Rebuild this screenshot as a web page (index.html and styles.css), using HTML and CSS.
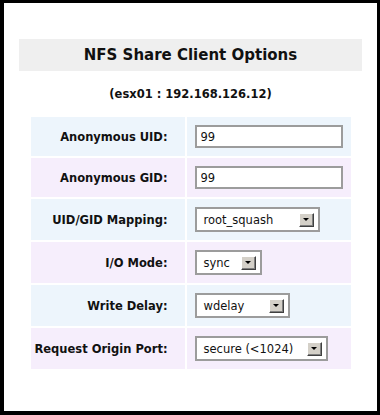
FILE: index.html
```html
<!DOCTYPE html>
<html lang="en">
<head>
  <meta charset="UTF-8" />
  <title>NFS Share Client Options</title>
  <link rel="stylesheet" href="styles.css">
</head>
<body>
  <div class="panel">
    <h2 class="title">NFS Share Client Options</h2>
    <p class="host">(esx01 : 192.168.126.12)</p>

    <table class="options">
      <tr class="blue">
        <th>Anonymous UID:</th>
        <td><input type="text" class="field" value="99" /></td>
      </tr>
      <tr class="pink">
        <th>Anonymous GID:</th>
        <td><input type="text" class="field" value="99" /></td>
      </tr>
      <tr class="blue">
        <th>UID/GID Mapping:</th>
        <td>
          <div class="select w-map"><span>root_squash</span><span class="btn"><i></i></span></div>
        </td>
      </tr>
      <tr class="pink">
        <th>I/O Mode:</th>
        <td>
          <div class="select w-mode"><span>sync</span><span class="btn"><i></i></span></div>
        </td>
      </tr>
      <tr class="blue">
        <th>Write Delay:</th>
        <td>
          <div class="select w-delay"><span>wdelay</span><span class="btn"><i></i></span></div>
        </td>
      </tr>
      <tr class="pink">
        <th>Request Origin Port:</th>
        <td>
          <div class="select w-port"><span>secure (&lt;1024)</span><span class="btn"><i></i></span></div>
        </td>
      </tr>
    </table>
  </div>
</body>
</html>
```

FILE: styles.css
```css
* {
  margin: 0;
  padding: 0;
  box-sizing: border-box;
}

html {
  background: #000;
}

body {
  margin: 3px 3px 4px 4px;
  height: 408px;
  background: #fff;
  font-family: "DejaVu Sans", Verdana, sans-serif;
  color: #111;
}

.panel {
  padding: 36px 15px 0;
}

.title {
  height: 32px;
  line-height: 32px;
  background: #efefef;
  text-align: center;
  font-size: 15px;
  font-weight: bold;
}

.host {
  margin-top: 15px;
  line-height: 16px;
  text-align: center;
  font-size: 11.5px;
  font-weight: bold;
}

.options {
  margin: 13px auto 0;
  width: 324px;
  border-spacing: 2px;
}

.options th {
  width: 154px;
  padding: 8px 17px 8px 0;
  text-align: right;
  font-size: 11.5px;
  font-weight: bold;
}

.options td {
  padding: 8px 8px;
}

.blue th,
.blue td {
  background: #edf5fc;
}

.pink th,
.pink td {
  background: #f6eefc;
}

.field {
  display: block;
  width: 148px;
  height: 23px;
  padding: 0 4px;
  border: 2px solid #9c9c9c;
  background: #fff;
  font-family: "DejaVu Sans", Verdana, sans-serif;
  font-size: 11.5px;
  color: #111;
}

.select {
  display: flex;
  align-items: center;
  justify-content: space-between;
  height: 25px;
  padding: 0 4px 0 7px;
  border: 2px solid #9c9c9c;
  background: #fff;
  font-size: 11.5px;
}

.w-map { width: 125px; }
.w-mode { width: 67px; }
.w-delay { width: 95px; }
.w-port { width: 133px; }

.btn {
  display: flex;
  align-items: center;
  justify-content: center;
  width: 15px;
  height: 14px;
  background: #d4d0c8;
  border-top: 1px solid #fff;
  border-left: 1px solid #fff;
  border-right: 1px solid #404040;
  border-bottom: 1px solid #404040;
  box-shadow: inset -1px -1px 0 #808080;
}

.btn i {
  width: 0;
  height: 0;
  border-left: 3px solid transparent;
  border-right: 3px solid transparent;
  border-top: 3px solid #000;
}
```
